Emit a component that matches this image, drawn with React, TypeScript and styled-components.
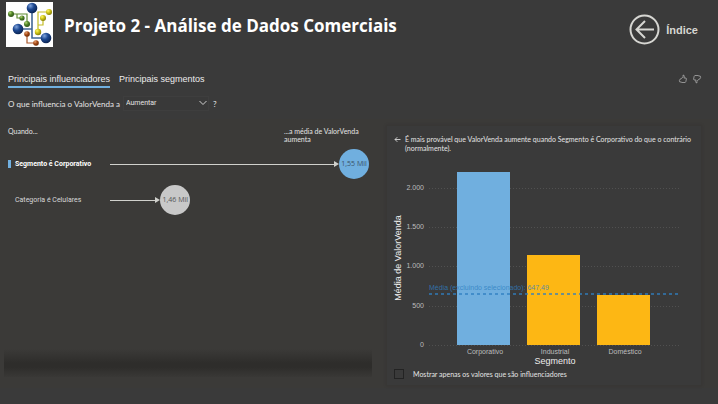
import React, { useState } from "react";
import styled, { createGlobalStyle } from "styled-components";

const sans = `"Liberation Sans", Arial, sans-serif`;
const label = `Roboto, "Liberation Sans", sans-serif`;
const humanist = `Lato, "Open Sans", sans-serif`;

const GlobalStyle = createGlobalStyle`
  *, *::before, *::after { box-sizing: border-box; }
  body { margin: 0; background: #3a3a3a; color: #e4e4e4; font-family: ${sans}; }
  button, select, input { font: inherit; color: inherit; margin: 0; }
`;

const Page = styled.div`
  min-height: 100vh;
  display: flex;
  flex-direction: column;
  padding-bottom: 16px;
  background: #3a3a3a;
`;

const Header = styled.header`
  display: flex;
  align-items: flex-start;
  height: 48px;
  padding: 2px 20px 0 6px;
`;

const Logo = styled.svg`
  display: block;
  width: 47px;
  height: 45px;
  flex: none;
`;

const Title = styled.h1`
  flex: 1;
  margin: 12px 0 0 11px;
  color: #fff;
  font: 700 17px/24px "Open Sans", "Noto Sans", sans-serif;
`;

const BackLink = styled.a`
  display: flex;
  align-items: center;
  gap: 6px;
  padding-top: 12px;
  color: #d6d6d2;
  font: 700 11px/16px ${sans};
  text-decoration: none;
  svg { display: block; }
`;

const Toolbar = styled.nav`
  display: flex;
  align-items: center;
  justify-content: space-between;
  padding: 24px 16px 0 8px;
`;

const TabList = styled.div`
  display: flex;
  gap: 9px;
`;

const Tab = styled.button<{ $active: boolean }>`
  height: 16px;
  padding: 0;
  border: 0;
  border-bottom: 2px solid ${(p) => (p.$active ? "#70afdf" : "transparent")};
  background: none;
  color: #ececec;
  font: 9px/14px ${sans};
`;

const Feedback = styled.div`
  display: flex;
  gap: 4px;
  padding-bottom: 2px;
`;

const IconButton = styled.button`
  display: block;
  padding: 0;
  border: 0;
  background: none;
  color: #aaa;
  svg { display: block; }
`;

const Question = styled.div`
  display: flex;
  align-items: center;
  margin-top: 8px;
  padding-left: 8px;
  font: 8px/14px ${humanist};
`;

const SelectBox = styled.div`
  position: relative;
  width: 86px;
  margin: 0 4px 0 3px;
`;

const Select = styled.select`
  display: block;
  width: 100%;
  height: 15px;
  padding: 0 2px;
  border: 1px solid #3e3e3e;
  background: #393939;
  font: 7px/13px ${label};
  appearance: none;
`;

const Chevron = styled.svg`
  position: absolute;
  top: 4px;
  right: 2px;
  pointer-events: none;
`;

const Visual = styled.main`
  flex: 1;
  display: grid;
  grid-template-columns: 368fr 316fr;
  column-gap: 14px;
  margin-top: 8px;
  padding: 6px 16px 2px 4px;
  background: #3b3a38;
`;

const Influencers = styled.section`
  display: flex;
  flex-direction: column;
  padding-bottom: 9px;
`;

const ColumnHeads = styled.div`
  display: flex;
  justify-content: space-between;
  padding: 2px 4px 0;
  font: 7px/8px ${humanist};
`;

const HeadText = styled.span<{ $width?: number }>`
  width: ${(p) => (p.$width ? `${p.$width}px` : "auto")};
`;

const List = styled.div`
  flex: 1;
  display: flex;
  flex-direction: column;
  gap: 6px;
  padding: 6px 3px 0 4px;
`;

const Influencer = styled.button<{ $selected: boolean }>`
  display: flex;
  align-items: center;
  width: 100%;
  padding: 0;
  border: 0;
  background: none;
  color: ${(p) => (p.$selected ? "#fff" : "#d8d8d8")};
  font: ${(p) => (p.$selected ? 700 : 400)} 7px/10px ${label};
  text-align: left;
`;

const RowLabel = styled.span<{ $selected: boolean }>`
  flex: none;
  width: 102px;
  padding-left: 4px;
  border-left: 3px solid ${(p) => (p.$selected ? "#70afdf" : "transparent")};
  line-height: 8px;
`;

const Track = styled.span`
  flex: 1;
  display: block;
`;

const Reach = styled.span`
  display: flex;
  align-items: center;
`;

const Stem = styled.span`
  flex: 1;
  height: 1px;
  background: #d0d0cc;
`;

const ArrowHead = styled.span`
  border: 3px solid transparent;
  border-left: 5px solid #d0d0cc;
  border-right: 0;
`;

const Bubble = styled.span<{ $selected: boolean }>`
  flex: none;
  display: grid;
  place-items: center;
  width: 30px;
  height: 30px;
  border-radius: 50%;
  background: ${(p) => (p.$selected ? "#70afdf" : "#c8c8c8")};
  color: ${(p) => (p.$selected ? "#3a5268" : "#555")};
  font: 400 7px/10px "Open Sans", "Noto Sans", sans-serif;
`;

const Fade = styled.div`
  height: 28px;
  background: linear-gradient(#3b3a38, #2e2d2b 50%, #2e2d2b 65%, #393836);
`;

const Card = styled.section`
  background: #3a3a3a;
  border: 1px solid #383735;
  box-shadow: 0 0 2px #353432;
`;

const CardHead = styled.div`
  display: flex;
  align-items: flex-start;
  gap: 4px;
  padding: 9px 6px 0 7px;
`;

const Explanation = styled.p`
  margin: 0;
  font: 7px/9px ${humanist};
`;

const Chart = styled.svg`
  display: block;
  width: 100%;
  margin-top: 7px;
  font-family: ${sans};
`;

const CheckRow = styled.label`
  display: flex;
  align-items: center;
  gap: 9px;
  padding: 3px 7px 6px;
  font: 7px/10px ${humanist};
`;

const Check = styled.input`
  appearance: none;
  width: 10px;
  height: 10px;
  border: 1px solid #232323;
  &:checked { background: #70afdf; }
`;

const influencers = [
  { label: "Segmento é Corporativo", value: "1,55 Mil", reach: 100 },
  { label: "Categoria é Celulares", value: "1,46 Mil", reach: 31 },
];

const ticks = [
  { label: "2.000", y: 28 },
  { label: "1.500", y: 67 },
  { label: "1.000", y: 106 },
  { label: "500", y: 146 },
  { label: "0", y: 185 },
];

const bars = [
  { label: "Corporativo", x: 70, top: 12, fill: "#70afdf" },
  { label: "Industrial", x: 140, top: 95, fill: "#fdb714" },
  { label: "Doméstico", x: 210, top: 135, fill: "#fdb714" },
];

function Molecule() {
  const balls: [number, number, number, string][] = [
    [26, 6, 5.3, "blue"], [12, 27, 5.3, "blue"], [40, 36, 5.3, "blue"],
    [5, 12, 3, "green"], [16, 16, 2.6, "green"], [21, 22, 3, "green"],
    [43, 10, 3, "yellow"], [37, 16, 3, "yellow"], [32, 30, 3.2, "yellow"],
    [21, 32, 2.8, "orange"], [30, 41, 2.8, "orange"],
  ];
  const tones = {
    blue: ["#7fa3dc", "#1c4790", "#0a214d"],
    green: ["#b5d977", "#528529", "#2b5016"],
    yellow: ["#fff96b", "#cfc517", "#807907"],
    orange: ["#e4a171", "#a94c17", "#672806"],
  };
  return (
    <Logo viewBox="0 0 47 45" role="img" aria-label="Logotipo">
      <defs>
        {Object.entries(tones).map(([name, c]) => (
          <radialGradient key={name} id={`ball-${name}`} cx="0.35" cy="0.3" r="0.75">
            <stop offset="0" stopColor={c[0]} />
            <stop offset="0.45" stopColor={c[1]} />
            <stop offset="1" stopColor={c[2]} />
          </radialGradient>
        ))}
      </defs>
      <rect width="47" height="45" fill="#fff" />
      <g fill="none" strokeWidth="1.2">
        <path d="M26 8V36H38M12 27H26" stroke="#426796" strokeWidth="1.6" />
        <path d="M5 12H21V21M11 12V16H16" stroke="#5f8c35" />
        <path d="M43 10H32V30M37 16V23H32" stroke="#c3bc25" />
        <path d="M21 32V41H30" stroke="#a9572a" />
      </g>
      {balls.map(([x, y, r, tone]) => (
        <circle key={`${x}-${y}`} cx={x} cy={y} r={r} fill={`url(#ball-${tone})`} />
      ))}
    </Logo>
  );
}

function Thumb({ down = false }: { down?: boolean }) {
  return (
    <svg width="10" height="10" viewBox="0 0 10 10" fill="none" stroke="currentColor" strokeWidth="0.8" strokeLinejoin="round">
      <path
        transform={down ? "rotate(180 5 5)" : undefined}
        d="M2 5.2 3.6 4.5 5 2.6V1.2L6 1.3 6.3 2.8 5.9 4H8L8.4 5 7.8 7.7 7.2 8.5H4L3 8H1.8L1.4 6.4Z"
      />
    </svg>
  );
}

function SegmentChart() {
  return (
    <Chart viewBox="0 0 314 206" role="img" aria-label="Média de ValorVenda por Segmento">
      {ticks.map((t) => (
        <g key={t.label}>
          <line x1="42" x2="293" y1={t.y + 0.5} y2={t.y + 0.5} stroke="#505050" strokeDasharray="1 2" />
          <text x="37" y={t.y + 2} textAnchor="end" fontSize="7" fill="#bdbdbd">{t.label}</text>
        </g>
      ))}
      {bars.map((b) => (
        <g key={b.label}>
          <rect x={b.x} y={b.top} width="53" height={185 - b.top} fill={b.fill} />
          <text x={b.x + 28} y="194" textAnchor="middle" fontSize="7" fill="#bdbdbd">{b.label}</text>
        </g>
      ))}
      <line x1="42" x2="293" y1="134" y2="134" stroke="#2f7fc1" strokeOpacity="0.7" strokeWidth="2" strokeDasharray="3 3" />
      <text x="42" y="130" fontSize="7" fill="#2f7fc1" fillOpacity="0.8">Média (excluindo selecionado): 647,49</text>
      <text x="168" y="204" textAnchor="middle" fontSize="9" fill="#ececec">Segmento</text>
      <text transform="translate(14 98) rotate(-90)" textAnchor="middle" fontSize="9" fill="#ececec">
        Média de ValorVenda
      </text>
    </Chart>
  );
}

export default function App() {
  const [tab, setTab] = useState(0);
  const [selected, setSelected] = useState(0);
  return (
    <Page>
      <GlobalStyle />
      <Header>
        <Molecule />
        <Title>Projeto 2 - Análise de Dados Comerciais</Title>
        <BackLink href="#indice">
          <svg width="31" height="31" viewBox="0 0 31 31" fill="none" stroke="#d6d6d2" strokeWidth="2">
            <circle cx="15.5" cy="15.5" r="14" />
            <path d="M25 15.5H7.5M16 7 7.5 15.5 16 24" />
          </svg>
          Índice
        </BackLink>
      </Header>
      <Toolbar>
        <TabList role="tablist">
          {["Principais influenciadores", "Principais segmentos"].map((name, i) => (
            <Tab key={name} role="tab" aria-selected={tab === i} $active={tab === i} onClick={() => setTab(i)}>
              {name}
            </Tab>
          ))}
        </TabList>
        <Feedback>
          <IconButton aria-label="Gostei"><Thumb /></IconButton>
          <IconButton aria-label="Não gostei"><Thumb down /></IconButton>
        </Feedback>
      </Toolbar>
      <Question>
        <label htmlFor="direction">O que influencia o ValorVenda a</label>
        <SelectBox>
          <Select id="direction" defaultValue="Aumentar">
            <option>Aumentar</option>
            <option>Diminuir</option>
          </Select>
          <Chevron width="8" height="6" viewBox="0 0 8 6" fill="none" stroke="#d0d0d0">
            <path d="M0.5 1 4 4.5 7.5 1" />
          </Chevron>
        </SelectBox>
        <span>?</span>
      </Question>
      <Visual>
        <Influencers>
          <ColumnHeads>
            <HeadText>Quando...</HeadText>
            <HeadText $width={84}>...a média de ValorVenda aumenta</HeadText>
          </ColumnHeads>
          <List>
            {influencers.map((row, i) => (
              <Influencer key={row.label} $selected={selected === i} onClick={() => setSelected(i)}>
                <RowLabel $selected={selected === i}>{row.label}</RowLabel>
                <Track>
                  <Reach style={{ width: `${row.reach}%` }}>
                    <Stem />
                    <ArrowHead />
                    <Bubble $selected={selected === i}>{row.value}</Bubble>
                  </Reach>
                </Track>
              </Influencer>
            ))}
          </List>
          <Fade />
        </Influencers>
        <Card>
          <CardHead>
            <IconButton aria-label="Voltar">
              <svg width="7" height="9" viewBox="0 0 7 9" fill="none" stroke="#d8d8d8" strokeWidth="0.9">
                <path d="M6.5 4.5H1M3.3 2.2 1 4.5 3.3 6.8" />
              </svg>
            </IconButton>
            <Explanation>
              É mais provável que ValorVenda aumente quando Segmento é Corporativo do que o contrário (normalmente).
            </Explanation>
          </CardHead>
          <SegmentChart />
          <CheckRow>
            <Check type="checkbox" />
            Mostrar apenas os valores que são influenciadores
          </CheckRow>
        </Card>
      </Visual>
    </Page>
  );
}
